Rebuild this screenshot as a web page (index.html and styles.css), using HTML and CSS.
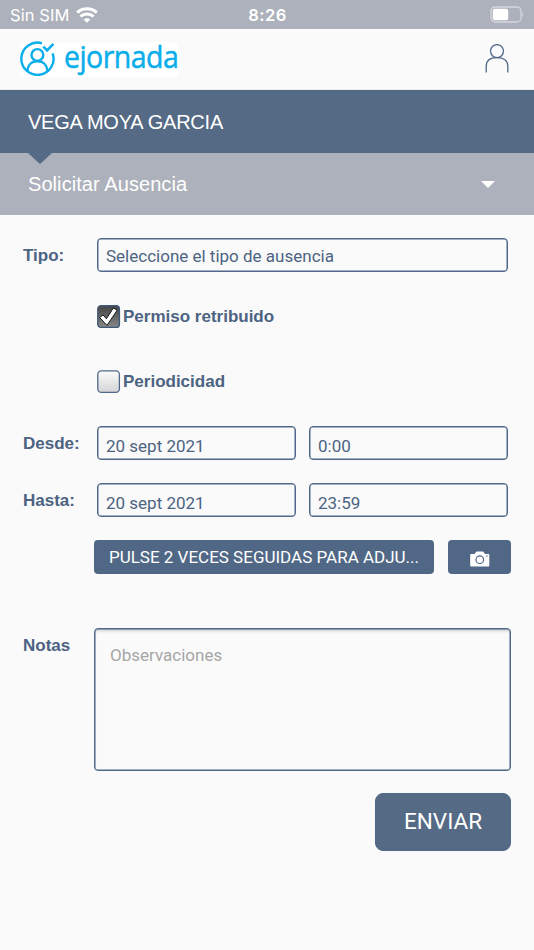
FILE: index.html
```html
<!DOCTYPE html>
<html lang="es">
<head>
<meta charset="utf-8">
<title>ejornada</title>
<link rel="stylesheet" href="styles.css">
</head>
<body>
<div class="status">
  <div class="carrier"><span class="sim">Sin SIM</span>
    <svg class="wifi" width="22" height="16" viewBox="0 0 22 16" fill="none" stroke="#fff" stroke-width="3"><path d="M1.2 5.6C6.7.6 15.3.6 20.8 5.6"/><path d="M4.5 9.5c3.6-3.4 9.4-3.4 13 0"/><path d="M11 15.7 7.6 12.5q3.4-2.7 6.8 0z" fill="#fff" stroke="none"/></svg>
  </div>
  <span class="clock">8:26</span>
  <svg class="battery" width="35" height="17" viewBox="0 0 35 17"><rect x="1" y="1" width="30" height="15" rx="4" fill="none" stroke="#d3d6dc" stroke-width="1.3"/><rect x="2.8" y="2.8" width="15.4" height="11.4" rx="2" fill="#fff"/><path d="M32.3 6q2.2 2.5 0 5z" fill="#d3d6dc"/></svg>
</div>
<header class="top">
  <div class="logo">
    <svg width="36" height="36" viewBox="0 0 36 36" fill="none" stroke="#0aaeea" stroke-width="2.4"><path d="M22 2.3A16.1 16.1 0 1 0 32.6 12.3"/><circle cx="17.4" cy="14" r="5.9"/><path d="M7.5 30.6C7.5 24 11.5 20.3 17.4 20.3S27.3 24 27.3 30.6"/><path d="M23.3 5.6 27.1 9.5 33.4 2.9" stroke-width="2.6"/></svg>
    <span class="brand">ejornada</span>
  </div>
  <svg class="user" width="26" height="30" viewBox="0 0 26 30" fill="none" stroke="#50698a" stroke-width="1.3"><circle cx="13" cy="7.1" r="6.5"/><path d="M2.2 28.4V22.4C2.2 16.4 6.5 13.6 13 13.6S23.8 16.4 23.8 22.4V28.4"/></svg>
</header>
<div class="name"><span>VEGA MOYA GARCIA</span></div>
<div class="menu"><span>Solicitar Ausencia</span><i class="caret"></i></div>
<main class="form">
  <div class="row tipo"><label>Tipo:</label><div class="field wide"><span>Seleccione el tipo de ausencia</span></div></div>
  <div class="check first"><svg width="24" height="24" viewBox="0 0 24 24"><defs><linearGradient id="dark" x2="0" y2="1"><stop stop-color="#444"/><stop offset="1" stop-color="#888"/></linearGradient></defs><rect x=".8" y=".8" width="21.6" height="21.6" rx="3.2" fill="url(#dark)" stroke="#3f5878" stroke-width="1.4"/><path d="m2.6 12.6 3.4-2.7 3.4 3.8L16.4 2.9l3.8 2.3L10 20.4z" fill="#fff" stroke="#111" stroke-width="1"/></svg><span>Permiso retribuido</span></div>
  <div class="check second"><svg width="24" height="24" viewBox="0 0 24 24"><defs><linearGradient id="light" x2="0" y2="1"><stop stop-color="#fcfcfc"/><stop offset="1" stop-color="#d4d4d4"/></linearGradient></defs><rect x=".8" y=".8" width="21.6" height="21.6" rx="3.6" fill="url(#light)" stroke="#50698a" stroke-width="1.3"/></svg><span>Periodicidad</span></div>
  <div class="row desde"><label>Desde:</label><div class="field"><span>20 sept 2021</span></div><div class="field"><span>0:00</span></div></div>
  <div class="row hasta"><label>Hasta:</label><div class="field"><span>20 sept 2021</span></div><div class="field"><span>23:59</span></div></div>
  <div class="buttons"><div class="btn attach"><span>PULSE 2 VECES SEGUIDAS PARA ADJU...</span></div><div class="btn camera"><svg width="20" height="16" viewBox="0 0 20 16"><path d="M1 3H4.5L6.2.8Q6.5.4 7 .4h5.5q.5 0 .8.4L15 3h3.5q.8 0 .8.8V14.6q0 .8-.8.8H1q-.8 0-.8-.8V3.8Q.2 3 1 3z" fill="#fff"/><circle cx="9.8" cy="8.7" r="3.8" fill="#fff" stroke="#506886" stroke-width="1.2"/><path d="M16.2 5h1.6" stroke="#506886"/></svg></div></div>
  <div class="notes"><label>Notas</label><div class="area"><span>Observaciones</span></div></div>
  <div class="send"><div class="btn submit"><span>ENVIAR</span></div></div>
</main>
</body>
</html>
```
FILE: styles.css
```css
* { box-sizing: border-box; }
body { margin: 0; height: 950px; background: #fafafa; color: #4c6382; font: 17px/20px Roboto, sans-serif; overflow: hidden; }
span, label { white-space: nowrap; }
svg { display: block; flex: none; }
.status { height: 29px; background: #adb1bb; color: #fff; display: grid; grid-template-columns: 1fr auto 1fr; align-items: center; padding: 0 9px 0 10px; font-family: Inter, sans-serif; }
.carrier { display: flex; align-items: center; gap: 6px; }
.sim { font-size: 16.5px; letter-spacing: .1px; }
.clock { font-size: 16.5px; font-weight: 600; letter-spacing: .4px; }
.battery { justify-self: end; }
.top { height: 61px; display: flex; align-items: center; justify-content: space-between; padding: 0 24px 0 20px; border-bottom: 1px solid #eee; }
.logo { display: flex; align-items: center; gap: 8px; width: 158px; height: 35px; background: #fff; color: #0aaeea; }
.brand { font: 31px/34px "Open Sans", sans-serif; letter-spacing: -.6px; -webkit-text-stroke: .5px #0aaeea; transform: translateY(-3px) scaleX(.92); transform-origin: left; }
.name { height: 63px; background: #556a84; color: #fff; padding: 21px 28px; font: 20px/22px "Liberation Sans", sans-serif; letter-spacing: -.22px; }
.menu { height: 62px; background: #adb1bb; color: #fff; padding: 0 38px 0 28px; display: flex; align-items: center; justify-content: space-between; font: 20px/22px "Liberation Sans", sans-serif; letter-spacing: .07px; position: relative; }
.menu::before { content: ""; position: absolute; left: 28px; top: 0; border: 12px solid transparent; border-top: 11px solid #556a84; border-bottom: 0; }
.caret { border: 7px solid transparent; border-top: 7px solid #fff; border-bottom: 0; margin-right: 1px; }
.form { padding: 23px 26px 0 23px; }
label, .check { font: bold 17px/20px "Liberation Sans", sans-serif; }
.row { display: grid; grid-template-columns: 61px 199px 199px; column-gap: 13px; align-items: center; height: 34px; }
.row label { padding-top: 2px; }
.field { height: 34px; border: 1px solid #50698a; box-shadow: inset 0 0 0 .5px #50698a; border-radius: 4px; padding: 9px 8px 0; line-height: 20px; }
.wide { grid-column: 2 / 4; padding-top: 7px; }
.check { display: flex; align-items: center; gap: 2px; padding-left: 74px; height: 24px; }
.check span { padding-bottom: 1px; }
.first { margin-top: 33px; }
.second { margin-top: 41px; }
.desde { margin-top: 32px; }
.hasta { margin-top: 23px; }
.buttons { display: flex; justify-content: space-between; margin: 23px -3px 0 71px; }
.btn { background: #506886; color: #fff; border-radius: 4px; height: 34px; display: flex; align-items: center; justify-content: center; }
.attach { width: 340px; }
.camera { width: 63px; padding-top: 3px; }
.notes { display: flex; justify-content: space-between; margin: 54px -3px 0 0; }
.notes label { margin-top: 8px; }
.area { width: 417px; height: 143px; border: 1px solid #50698a; box-shadow: inset 0 0 0 .5px #50698a, inset 0 3px 3px -1px #ccc; border-radius: 4px; padding: 16px 15px; color: #a6a6a6; }
.send { display: flex; justify-content: flex-end; margin: 22px -3px 0 0; }
.submit { width: 136px; height: 58px; border-radius: 8px; background: #556a84; border: 1px solid #50698a; font-size: 22.5px; padding-bottom: 2px; }
```
